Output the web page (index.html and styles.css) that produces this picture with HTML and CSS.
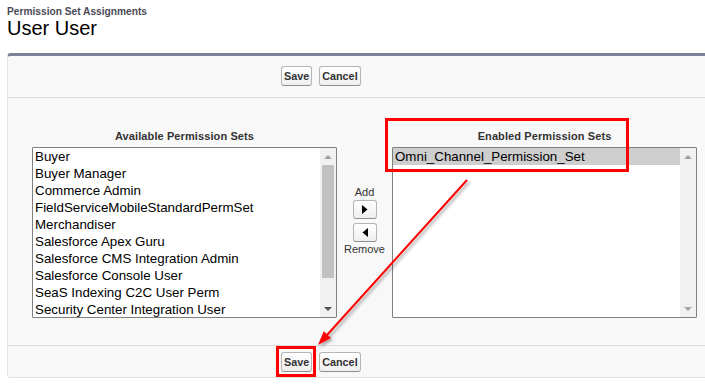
FILE: index.html
```html
<!DOCTYPE html>
<html lang="en">
<head>
    <meta charset="UTF-8">
    <title>Permission Set Assignments: User User</title>
    <link rel="stylesheet" href="styles.css">
</head>
<body>
    <div class="page">
        <div class="page-head">
            <div class="page-type">Permission Set Assignments</div>
            <h1 class="page-title">User User</h1>
        </div>

        <div class="block">
            <div class="block-buttons top">
                <button class="btn">Save</button>
                <button class="btn">Cancel</button>
            </div>

            <div class="block-body">
                <div class="duel">
                    <div class="duel-col">
                        <div class="duel-label">Available Permission Sets</div>
                        <div class="listbox">
                            <ul class="listbox-items">
                                <li>Buyer</li>
                                <li>Buyer Manager</li>
                                <li>Commerce Admin</li>
                                <li>FieldServiceMobileStandardPermSet</li>
                                <li>Merchandiser</li>
                                <li>Salesforce Apex Guru</li>
                                <li>Salesforce CMS Integration Admin</li>
                                <li>Salesforce Console User</li>
                                <li>SeaS Indexing C2C User Perm</li>
                                <li>Security Center Integration User</li>
                            </ul>
                            <div class="sbar">
                                <div class="sbar-btn"><span class="tri up"></span></div>
                                <div class="sbar-thumb"></div>
                                <div class="sbar-fill"></div>
                                <div class="sbar-btn"><span class="tri down dark"></span></div>
                            </div>
                        </div>
                    </div>

                    <div class="duel-mid">
                        <div class="mid-label">Add</div>
                        <button class="arrow-btn">
                            <svg width="6" height="9" viewBox="0 0 6 9"><polygon points="0,0 5.5,4.5 0,9" fill="#000"/></svg>
                        </button>
                        <button class="arrow-btn">
                            <svg width="6" height="9" viewBox="0 0 6 9"><polygon points="6,0 0.5,4.5 6,9" fill="#000"/></svg>
                        </button>
                        <div class="mid-label">Remove</div>
                    </div>

                    <div class="duel-col">
                        <div class="duel-label">Enabled Permission Sets</div>
                        <div class="listbox">
                            <ul class="listbox-items">
                                <li class="selected">Omni_Channel_Permission_Set</li>
                            </ul>
                            <div class="sbar">
                                <div class="sbar-btn"><span class="tri up"></span></div>
                                <div class="sbar-fill"></div>
                                <div class="sbar-btn"><span class="tri down"></span></div>
                            </div>
                        </div>
                    </div>
                </div>
            </div>

            <div class="block-buttons bottom">
                <button class="btn">Save</button>
                <button class="btn">Cancel</button>
            </div>
        </div>

        <!-- annotations drawn over the screenshot -->
        <div class="mark mark-enabled"></div>
        <div class="mark mark-save"></div>
        <svg class="pointer" width="705" height="384" viewBox="0 0 705 384">
            <defs>
                <filter id="shade" x="-20%" y="-20%" width="140%" height="140%">
                    <feDropShadow dx="2" dy="2" stdDeviation="1.5" flood-color="#000" flood-opacity="0.35"/>
                </filter>
            </defs>
            <g filter="url(#shade)">
                <line x1="467" y1="180" x2="327" y2="335" stroke="#f00" stroke-width="2"/>
                <polygon points="318,345 331,338 323.7,331.2" fill="#f00"/>
            </g>
        </svg>
    </div>
</body>
</html>
```

FILE: styles.css
```css
html, body {
    margin: 0;
    overflow: hidden;
    background: #fff;
}
body {
    font-family: "Liberation Sans", Arial, sans-serif;
    color: #000;
}
.page {
    position: relative;
    width: 705px;
    height: 384px;
    padding: 6px 0 0 7px;
    box-sizing: border-box;
}
.page-type {
    font-size: 10.2px;
    line-height: 12px;
    font-weight: bold;
    color: #4a4a56;
}
.page-title {
    margin: 0;
    font-size: 20px;
    line-height: 20px;
    font-weight: normal;
    color: #000;
}
.block {
    margin-top: 15px;
    width: 730px;
    background: #f8f8f8;
    border: 1px solid #e3e3e3;
    border-top: 3px solid #7a8398;
    border-radius: 4px;
}
.block-buttons {
    display: flex;
    gap: 7px;
    padding-left: 273px;
}
.block-buttons.top {
    padding-top: 10px;
    padding-bottom: 11px;
    border-bottom: 1px solid #dbdbdb;
}
.block-buttons.bottom {
    padding-top: 6px;
    padding-bottom: 5px;
    border-top: 1px solid #dbdbdb;
}
.btn {
    height: 20px;
    padding: 0 2px;
    font-family: "Liberation Sans", Arial, sans-serif;
    font-size: 10.8px;
    font-weight: bold;
    color: #333;
    background: linear-gradient(#ffffff, #efefef);
    border: 1px solid #b5b5b5;
    border-bottom-color: #8f8f8f;
    border-radius: 3px;
}
.block-body {
    padding: 31px 0 27px 24px;
}
.duel {
    display: flex;
}
.duel-col {
    width: 305px;
}
.duel-label {
    font-size: 11px;
    line-height: 14px;
    font-weight: bold;
    color: #333;
    text-align: center;
    margin-bottom: 4px;
    letter-spacing: 0.1px;
}
.listbox {
    display: flex;
    height: 171px;
    background: #fff;
    border: 1px solid #808080;
    box-sizing: border-box;
    border-radius: 1px;
}
.listbox-items {
    flex: 1;
    margin: 0;
    padding: 0;
    list-style: none;
    font-size: 13.333px;
}
.listbox-items li {
    height: 17px;
    line-height: 17px;
    padding-left: 2px;
    white-space: nowrap;
}
.listbox-items li.selected {
    background: #cecece;
}
.sbar {
    width: 16px;
    display: flex;
    flex-direction: column;
    background: #f1f1f1;
}
.sbar-btn {
    height: 17px;
    display: flex;
    align-items: center;
    justify-content: center;
}
.sbar-thumb {
    height: 113px;
    margin: 0 2px;
    background: #c1c1c1;
}
.sbar-fill {
    flex: 1;
}
.tri {
    width: 0;
    height: 0;
    border-left: 4px solid transparent;
    border-right: 4px solid transparent;
}
.tri.up {
    border-bottom: 4px solid #a3a3a3;
}
.tri.down {
    border-top: 4px solid #a3a3a3;
}
.tri.down.dark {
    border-top-color: #505050;
}
.duel-mid {
    width: 55px;
    padding-top: 57px;
    display: flex;
    flex-direction: column;
    align-items: center;
}
.mid-label {
    font-size: 11px;
    line-height: 13px;
    color: #333;
}
.arrow-btn {
    width: 24px;
    height: 19px;
    margin: 1px 0 3px;
    padding: 0;
    display: flex;
    align-items: center;
    justify-content: center;
    background: linear-gradient(#ffffff, #eeeeee);
    border: 1px solid #b5b5b5;
    border-bottom-color: #8f8f8f;
    border-radius: 3px;
}
.arrow-btn + .mid-label {
    margin-top: -2px;
}
.mark {
    position: absolute;
    border: 3px solid #f00;
    box-sizing: border-box;
}
.mark-enabled {
    left: 385px;
    top: 118px;
    width: 244px;
    height: 54px;
}
.mark-save {
    left: 276px;
    top: 346px;
    width: 40px;
    height: 31px;
}
.pointer {
    position: absolute;
    left: 0;
    top: 0;
    pointer-events: none;
}
```
